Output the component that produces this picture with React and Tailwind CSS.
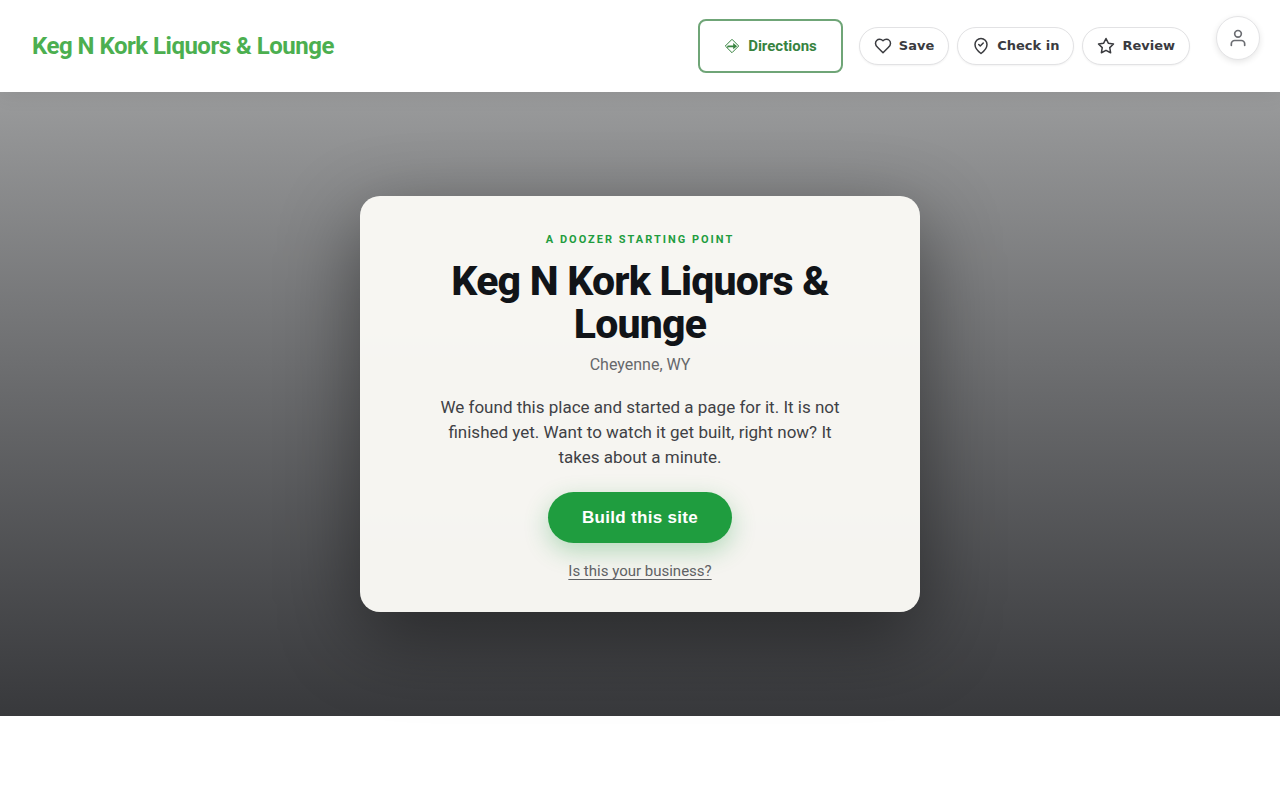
import { FiStar, FiUser } from 'react-icons/fi'

const BUSINESS = 'Keg N Kork Liquors & Lounge'

function DirectionsIcon() {
  return (
    <svg width="16" height="16" viewBox="0 0 16 16" fill="none" stroke="currentColor" strokeLinejoin="round" aria-hidden="true">
      <path d="M8 1.3 14.700 8 8 14.700 1.300 8Z" />
      <path d="M3.200 9.900V8.600c0-.8.500-1.200 1.200-1.200h4.800V5l3.900 3.200-3.900 3.100V9.200H4.600Z" fill="currentColor" stroke="none" />
    </svg>
  )
}

/** 18px line icon used inside the pill buttons. */
function LineIcon({ children }) {
  return (
    <svg width="18" height="18" viewBox="0 0 24 24" fill="none" stroke="currentColor" strokeWidth="2" strokeLinecap="round" strokeLinejoin="round" aria-hidden="true">
      {children}
    </svg>
  )
}

function HeartIcon() {
  return (
    <LineIcon>
      <path d="M19 14c1.49-1.46 3-3.21 3-5.5A5.5 5.5 0 0 0 16.5 3c-1.76 0-3 .5-4.5 2-1.5-1.5-2.74-2-4.5-2A5.5 5.5 0 0 0 2 8.5c0 2.3 1.5 4.05 3 5.5l7 7Z" />
    </LineIcon>
  )
}

function CheckInIcon() {
  return (
    <LineIcon>
      <path d="M20 10c0 6-8 12-8 12s-8-6-8-12a8 8 0 0 1 16 0Z" />
      <path d="m9 10 2 2 4-4" />
    </LineIcon>
  )
}

function PillButton({ icon, children }) {
  return (
    <button
      type="button"
      className="flex h-[38px] items-center gap-[7px] rounded-full border border-[#e2e2e4] bg-white px-3.5 font-['DejaVu_Sans',sans-serif] text-[13px] font-bold text-[#3a3b3f] shadow-[0_1px_2px_rgba(0,0,0,0.05)]"
    >
      {icon}
      {children}
    </button>
  )
}

function Header() {
  return (
    <header className="relative flex items-center justify-between bg-white py-[19px] pr-5 pl-8 shadow-[0_2px_20px_rgba(0,0,0,0.08)]">
      <a href="#" className="text-2xl font-bold tracking-[-0.5px] text-[#4caf50]">
        {BUSINESS}
      </a>
      <div className="flex items-center">
        <a
          href="#directions"
          className="mr-4 flex h-[54px] items-center gap-2 rounded-lg border-2 border-[#6fa577] px-6 text-[15px] font-bold text-[#37833f]"
        >
          <DirectionsIcon />
          Directions
        </a>
        <div className="flex items-center gap-2">
          <PillButton icon={<HeartIcon />}>Save</PillButton>
          <PillButton icon={<CheckInIcon />}>Check in</PillButton>
          <PillButton icon={<FiStar size={18} />}>Review</PillButton>
        </div>
        <button
          type="button"
          aria-label="Account"
          className="-mt-[3px] ml-[26px] flex size-11 items-center justify-center self-start rounded-full border border-[#e4e4e6] bg-white text-[#6b6d72] shadow-[0_2px_6px_rgba(0,0,0,0.1)]"
        >
          <FiUser size={20} />
        </button>
      </div>
    </header>
  )
}

function StartCard() {
  return (
    <section className="flex w-full max-w-[560px] flex-col items-center rounded-[20px] bg-[#fbfaf6]/97 px-10 pt-9 pb-[31px] text-center shadow-[0_24px_80px_rgba(0,0,0,0.45)]">
      <p className="text-[11px] leading-4 font-bold tracking-[2px] text-[#1f9d3f] uppercase">
        A Doozer starting point
      </p>
      <h1 className="mt-3 text-[41px] leading-[43px] font-extrabold tracking-[-0.8px] text-[#111418]">
        {BUSINESS}
      </h1>
      <p className="mt-[7px] text-base leading-6 text-[#66686b]">Cheyenne, WY</p>
      <p className="mt-[18px] max-w-[400px] text-[17px] leading-[25px] text-[#3f4145]">
        We found this place and started a page for it. It is not finished yet. Want to watch it get built, right now? It
        takes about a minute.
      </p>
      <button
        type="button"
        className="mt-[22px] h-[51px] rounded-full bg-[#1f9d3f] px-[34px] font-['Liberation_Sans',sans-serif] text-[17px] font-bold tracking-[0.3px] text-white shadow-[0_8px_24px_rgba(31,157,63,0.3)]"
      >
        Build this site
      </button>
      <a href="#claim" className="mt-[18px] text-[15px] leading-5 text-[#5f6164] underline underline-offset-[3px]">
        Is this your business?
      </a>
    </section>
  )
}

export default function App() {
  return (
    <div className="min-h-screen bg-white font-[Roboto,sans-serif]">
      <Header />
      <main className="flex justify-center bg-linear-to-b from-[#9a9b9c] to-[#38393c] px-6 py-[104px]">
        <StartCard />
      </main>
    </div>
  )
}
